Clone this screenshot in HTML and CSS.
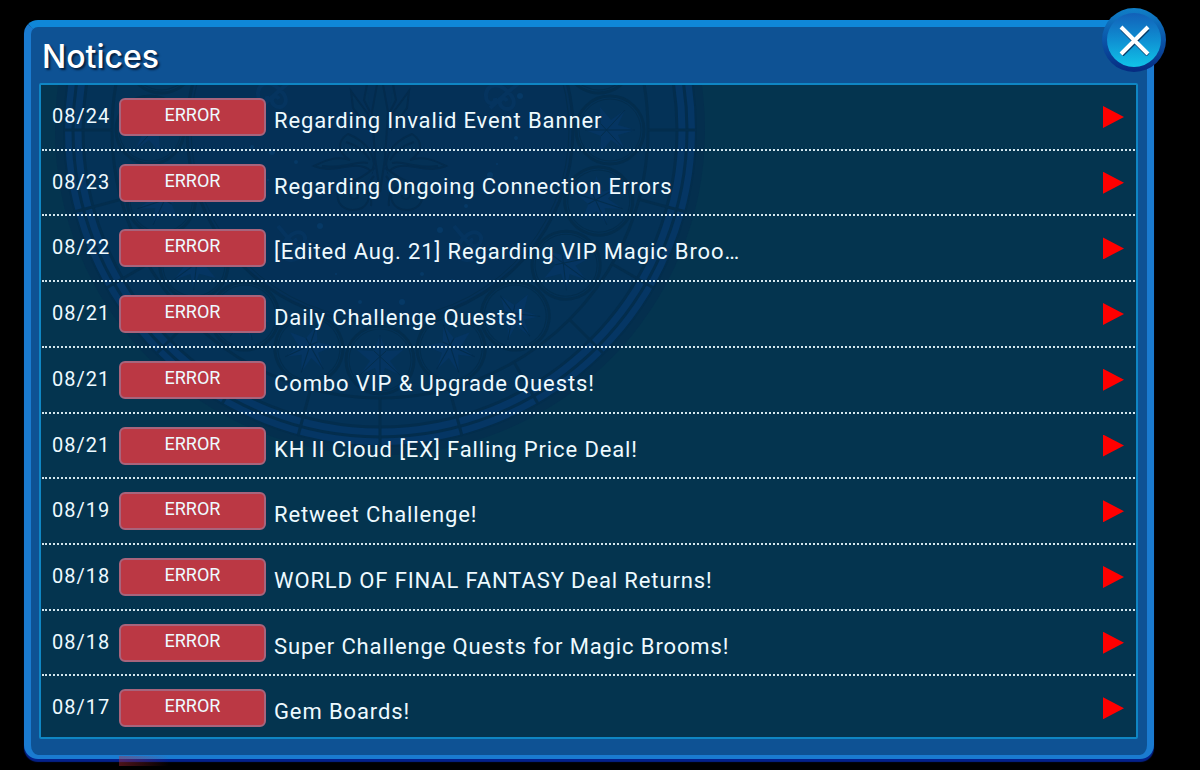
FILE: index.html
```html
<!DOCTYPE html>
<html lang="en">
<head>
    <meta charset="UTF-8">
    <meta name="viewport" content="width=device-width, initial-scale=1.0">
    <title>Notices</title>
    <link rel="stylesheet" href="styles.css">
</head>
<body>
    <main class="panel">
        <h1>Notices</h1>
        <button type="button" class="close-btn" aria-label="Close">
            <svg viewBox="0 0 32 32" width="32" height="32">
                <path class="cross-shadow" d="M4 5 L30 31 M30 5 L4 31"/>
                <path class="cross" d="M3 3 L30 30 M30 3 L3 30"/>
            </svg>
        </button>
        <div class="list-box">
            <svg class="window-art" viewBox="-330 -330 660 660" width="660" height="660" aria-hidden="true">
                <defs>
                    <g id="petal">
                        <circle r="34" class="glass"/>
                        <circle r="31" class="line thin"/>
                        <path class="star" d="M0 -25 L5 -8 L20 -15 L10 -1 L23 10 L6 9 L0 25 L-6 9 L-23 10 L-10 -1 L-20 -15 L-5 -8 Z"/>
                        <path class="line thin" d="M0 -25 V25 M-20 -15 L6 9 M20 -15 L-6 9"/>
                    </g>
                    <g id="wing">
                        <path d="M6 34 C8 18 18 10 32 4 C42 10 44 22 30 30 C44 25 58 32 66 36 C52 42 40 37 28 36 C17 35 12 38 8 42 Z"/>
                        <path d="M10 30 C16 20 24 15 34 12 M12 33 C25 30 37 40 58 36"/>
                        <path d="M5 38 C15 44 20 50 30 52 C48 55 46 80 27 80 C12 80 8 66 14 60 C19 52 34 57 30 66 C28 71 21 69 22 65"/>
                        <path d="M6 46 C16 57 7 66 9 76"/>
                        <path d="M12 -16 L29 -39 L27 -22 L12 -2 Z"/>
                        <path d="M10 -18 L16 -30 L13 -46"/>
                    </g>
                    <g id="swirl">
                        <path d="M0 0 C10 -12 22 -3 15 6 C9 12 3 4 9 1 M0 0 C-9 8 -9 20 2 22 C13 23 14 12 6 13 M0 0 L-10 -12 M0 0 L16 18"/>
                    </g>
                </defs>
                <circle r="325" class="rim"/>
                <circle r="316" class="ring"/>
                <circle r="307" class="line"/>
                <circle r="297" class="glass"/>
                <circle r="268" class="glass"/>
                <g id="spokes" class="line"></g>
                <g id="petals"></g>
                <circle r="193" class="inner"/>
                <circle r="189" class="line thin"/>
                <g class="emblem">
                    <path d="M0 -62 L-8 -18 L-5 28 L0 62 L5 28 L8 -18 Z"/>
                    <use href="#wing"/>
                    <use href="#wing" transform="scale(-1 1)"/>
                </g>
                <g class="swirls">
                    <use href="#swirl" transform="translate(-92 108)"/>
                    <use href="#swirl" transform="translate(84 108)"/>
                    <use href="#swirl" transform="translate(-100 -40) rotate(90)"/>
                    <use href="#swirl" transform="translate(128 -38) rotate(90)"/>
                </g>
                <g id="sparks" class="sparks"></g>
            </svg>
            <ul class="notices">
                <li><a href="#"><time>08/24</time><span class="badge">ERROR</span><span class="subject">Regarding Invalid Event Banner</span><i class="arrow"></i></a></li>
                <li><a href="#"><time>08/23</time><span class="badge">ERROR</span><span class="subject">Regarding Ongoing Connection Errors</span><i class="arrow"></i></a></li>
                <li><a href="#"><time>08/22</time><span class="badge">ERROR</span><span class="subject">[Edited Aug. 21] Regarding VIP Magic Broo…</span><i class="arrow"></i></a></li>
                <li><a href="#"><time>08/21</time><span class="badge">ERROR</span><span class="subject">Daily Challenge Quests!</span><i class="arrow"></i></a></li>
                <li><a href="#"><time>08/21</time><span class="badge">ERROR</span><span class="subject">Combo VIP &amp; Upgrade Quests!</span><i class="arrow"></i></a></li>
                <li><a href="#"><time>08/21</time><span class="badge">ERROR</span><span class="subject">KH II Cloud [EX] Falling Price Deal!</span><i class="arrow"></i></a></li>
                <li><a href="#"><time>08/19</time><span class="badge">ERROR</span><span class="subject">Retweet Challenge!</span><i class="arrow"></i></a></li>
                <li><a href="#"><time>08/18</time><span class="badge">ERROR</span><span class="subject">WORLD OF FINAL FANTASY Deal Returns!</span><i class="arrow"></i></a></li>
                <li><a href="#"><time>08/18</time><span class="badge">ERROR</span><span class="subject">Super Challenge Quests for Magic Brooms!</span><i class="arrow"></i></a></li>
                <li><a href="#"><time>08/17</time><span class="badge">ERROR</span><span class="subject">Gem Boards!</span><i class="arrow"></i></a></li>
            </ul>
        </div>
    </main>

    <script>
        const svgNS = 'http://www.w3.org/2000/svg';

        function addShape(parentId, tag, attrs) {
            const el = document.createElementNS(svgNS, tag);
            Object.keys(attrs).forEach(key => el.setAttribute(key, attrs[key]));
            document.getElementById(parentId).appendChild(el);
        }

        // 24 spokes in the outer ring
        for (let i = 0; i < 24; i++) {
            addShape('spokes', 'path', { d: 'M268 0 H316', transform: `rotate(${i * 15})` });
        }

        // 20 round panes with a star in each
        for (let i = 0; i < 20; i++) {
            addShape('petals', 'use', { href: '#petal', transform: `rotate(${i * 18}) translate(230 0) rotate(90)` });
        }

        const sparks = [
            [-143, -25], [-128, 17], [-108, 22], [-112, 50], [-84, 32], [-60, 96], [-55, 120],
            [-20, 172], [22, 172], [-44, 144], [42, 144], [60, 100], [72, 150], [86, 76],
            [110, 45], [117, 34], [136, 8], [140, -34], [158, 20], [-150, 44]
        ];
        sparks.forEach(([cx, cy], i) => addShape('sparks', 'circle', { cx, cy, r: i % 3 + 1 }));
    </script>
</body>
</html>
```
FILE: styles.css
```css
* {
    box-sizing: border-box;
}
body {
    margin: 0;
    min-height: 100vh;
    padding: 20px 46px 11px 24px;
    display: flex;
    background-color: #000;
    color: #eefaff;
    font-family: Roboto, sans-serif;
}
.panel {
    position: relative;
    flex: 1;
    display: flex;
    flex-direction: column;
    min-width: 0;
    padding: 0 9px 16px 8px;
    border: 7px solid #1a7bd0;
    border-top-color: #0f87d8;
    border-bottom: 4px solid #1a7bd0;
    border-radius: 14px;
    background-color: #0e5294;
    box-shadow: 0 3px 1px #04218a;
}
/* glow under the lower edge */
.panel::after {
    content: "";
    position: absolute;
    left: 88px;
    bottom: -11px;
    width: 50px;
    height: 10px;
    background: linear-gradient(90deg, rgba(190, 45, 60, 0.4), rgba(190, 45, 60, 0));
}
h1 {
    margin: 0;
    padding: 9px 0 0 3px;
    height: 56px;
    font-family: Inter, sans-serif;
    font-size: 32px;
    font-weight: 500;
    line-height: 42px;
    color: #fff;
    text-shadow: 2px 2px 2px #06203f;
}
.close-btn {
    position: absolute;
    top: -19px;
    right: -19px;
    width: 64px;
    height: 64px;
    padding: 0;
    display: flex;
    align-items: center;
    justify-content: center;
    border: 5px solid transparent;
    border-radius: 50%;
    background:
        linear-gradient(#1260b8, #0f8fd2 50%, #10c4e8) padding-box,
        linear-gradient(#1080c8, #0b55a8 50%, #062a80) border-box;
    cursor: pointer;
}
.close-btn path {
    fill: none;
    stroke-width: 4;
}
.cross {
    stroke: #fff;
}
.cross-shadow {
    stroke: #063a66;
}
.list-box {
    position: relative;
    flex: 1;
    display: flex;
    overflow: hidden;
    border: 2px solid #0f86c4;
    border-radius: 2px;
    background-color: #04344f;
}
.window-art {
    position: absolute;
    left: 9px;
    top: -285px;
}
.rim {
    fill: #042f4e;
}
.ring {
    fill: #053664;
    stroke: #032d4c;
    stroke-width: 2;
}
.glass {
    fill: #043257;
    stroke: #032d4d;
    stroke-width: 3;
}
.inner {
    fill: #043057;
    stroke: #032c4d;
    stroke-width: 3;
}
.line {
    fill: none;
    stroke: #032d4d;
    stroke-width: 3;
}
.thin {
    stroke-width: 1;
}
.star {
    fill: #053562;
}
.emblem {
    fill: #043156;
    stroke: #032b4d;
    stroke-width: 2;
}
.swirls {
    fill: none;
    stroke: #05345f;
    stroke-width: 4;
}
.sparks {
    fill: #063966;
}
.notices {
    position: relative;
    flex: 1;
    display: flex;
    flex-direction: column;
    min-width: 0;
    margin: 0;
    padding: 0 1px;
    list-style: none;
}
.notices li {
    flex: 1 1 auto;
    border-bottom: 2px dotted #d3e6ee;
}
.notices li:last-child {
    border-bottom: none;
}
.notices a {
    display: flex;
    align-items: flex-start;
    padding: 13px 11px 12px 10px;
    color: inherit;
    text-decoration: none;
}
.notices li:last-child a {
    padding-bottom: 9px;
}
time {
    width: 67px;
    font-size: 20px;
    line-height: 36px;
    letter-spacing: 1px;
}
.badge {
    width: 147px;
    height: 38px;
    border: 2px solid #a8647c;
    border-radius: 6px;
    background-color: #bb3844;
    font-size: 18px;
    line-height: 30px;
    text-align: center;
}
.subject {
    flex: 1;
    min-width: 0;
    padding: 8px 0 0 8px;
    overflow: hidden;
    text-overflow: ellipsis;
    white-space: nowrap;
    font-size: 22px;
    line-height: 30px;
    letter-spacing: 0.04em;
}
.arrow {
    width: 21px;
    height: 22px;
    margin-top: 8px;
    background-color: #f00;
    clip-path: polygon(0 0, 100% 50%, 0 100%);
}
```
